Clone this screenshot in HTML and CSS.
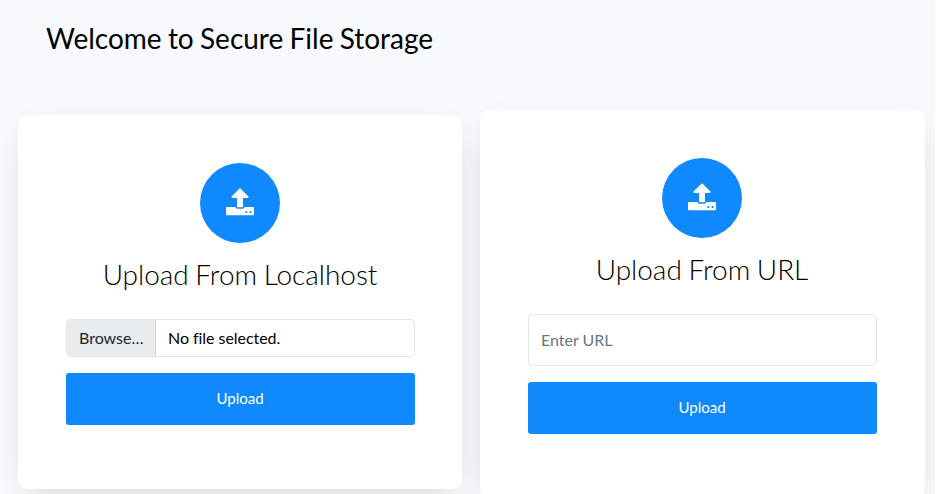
FILE: index.html
```html
<!DOCTYPE html>
<html lang="en">
<head>
<meta charset="utf-8">
<title>Secure File Storage</title>
<link rel="stylesheet" href="styles.css">
</head>
<body>
<div class="page">
<h1 class="title">Welcome to Secure File Storage</h1>
<main class="cards">
<section class="card card-local">
<div class="icon"><svg viewBox="0 0 28 28"><path d="M11 18.200V10H6.500c-1 0-1.400-1-.7-1.700L13.100.9c.5-.5 1.300-.5 1.800 0l7.300 7.400c.7.700.3 1.700-.7 1.700H17v8.200c0 .6-.4 1-1 1h-4c-.6 0-1-.4-1-1z"/><path fill-rule="evenodd" d="M1.300 19h8.300c.1 1 1 1.800 2.200 1.800h4.400c1.200 0 2.100-.8 2.200-1.800h8.300c.8 0 1.300.5 1.300 1.300v5.700c0 .8-.5 1.300-1.300 1.300H1.300C.5 27.300 0 26.800 0 26v-5.700C0 19.500.5 19 1.300 19zm19 3.900a1.100 1.100 0 1 0 .01 2.200 1.100 1.100 0 1 0 0-2.200zm4.300 0a1.100 1.100 0 1 0 .01 2.200 1.100 1.100 0 1 0 0-2.200z"/></svg></div>
<h2>Upload From Localhost</h2>
<div class="file"><span class="browse">Browse…</span><span class="filename">No file selected.</span></div>
<button class="upload">Upload</button>
</section>
<section class="card card-url">
<div class="icon"><svg viewBox="0 0 28 28"><path d="M11 18.200V10H6.500c-1 0-1.400-1-.7-1.700L13.100.9c.5-.5 1.300-.5 1.800 0l7.300 7.400c.7.700.3 1.700-.7 1.700H17v8.200c0 .6-.4 1-1 1h-4c-.6 0-1-.4-1-1z"/><path fill-rule="evenodd" d="M1.300 19h8.300c.1 1 1 1.800 2.200 1.800h4.400c1.200 0 2.100-.8 2.200-1.800h8.300c.8 0 1.300.5 1.300 1.300v5.700c0 .8-.5 1.300-1.300 1.300H1.300C.5 27.300 0 26.800 0 26v-5.700C0 19.500.5 19 1.300 19zm19 3.900a1.100 1.100 0 1 0 .01 2.200 1.100 1.100 0 1 0 0-2.200zm4.300 0a1.100 1.100 0 1 0 .01 2.200 1.100 1.100 0 1 0 0-2.200z"/></svg></div>
<h2>Upload From URL</h2>
<input class="url" type="text" placeholder="Enter URL">
<button class="upload">Upload</button>
</section>
</main>
</div>
</body>
</html>
```

FILE: styles.css
```css
* { box-sizing: border-box; }
html { background: #fff; }
body { margin: 0; color: #000; font: 16px/1.5 Lato, sans-serif; overflow: hidden; }
.page { width: 935px; height: 494px; overflow: hidden; padding: 21px 10px 0 18px; background: #f8f9fd; }
.title { margin: 0 0 55px 28px; font-size: 28px; line-height: 34px; font-weight: 400; word-spacing: -.9px; }
.cards { display: flex; align-items: flex-start; gap: 18px; }
.card { flex: none; width: 444px; height: 374px; padding: 48px 47px 0 48px; background: #fff; border-radius: 10px; box-shadow: 0 10px 34px -15px rgba(0,0,0,.24); }
.card-local { margin-top: 5px; }
.card-url { width: 445px; height: 388px; padding-right: 48px; }
.icon { width: 80px; height: 80px; margin: 0 auto 0 134px; border-radius: 50%; background: #1089ff; display: flex; align-items: center; justify-content: center; }
.icon svg { width: 28px; height: 28px; margin-top: -2px; fill: #fff; }
h2 { margin: 14px 0 28px; padding-right: 1px; text-align: center; font-weight: 300; font-size: 28px; line-height: 34px; word-spacing: -.9px; letter-spacing: -.03px; }
.file { height: 38px; display: flex; border: 1px solid #e3e4e5; border-radius: 5px; overflow: hidden; line-height: 36px; }
.browse { width: 89px; padding-left: 12px; background: #e9ecef; color: #212529; border-right: 1px solid #ced4da; }
.filename { padding-left: 12px; letter-spacing: -.05px; }
.url { display: block; width: 100%; height: 52px; padding: 0 12px 2px; border: 1px solid #e3e4e5; border-radius: 5px; font: inherit; }
.url::placeholder { color: #6c757d; opacity: 1; }
.upload { display: block; width: 100%; height: 52px; margin-top: 16px; padding: 0 1px 2px 0; border: 0; border-radius: 3px; background: #1089ff; color: #fff; font: 15px Lato, sans-serif; }
```
